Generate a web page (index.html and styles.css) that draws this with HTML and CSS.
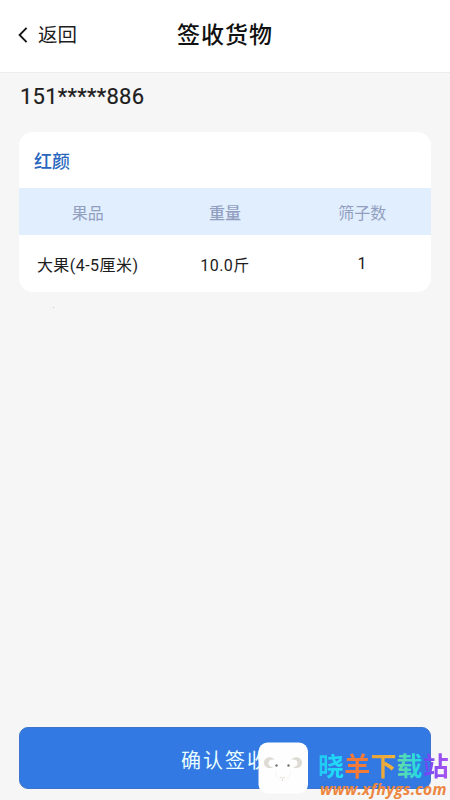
FILE: index.html
```html
<!DOCTYPE html>
<html lang="zh-CN">
<head>
<meta charset="utf-8">
<title>签收货物</title>
<link rel="stylesheet" href="styles.css">
</head>
<body>
<div class="page">
  <header class="header">
    <div class="back">
      <svg class="chevron" width="10" height="18" viewBox="0 0 10 18"><path d="M8.6 1.8 1.6 9l7 7.2" fill="none" stroke="#151515" stroke-width="1.9"/></svg>
      <span>返回</span>
    </div>
    <h1 class="title">签收货物</h1>
  </header>
  <main class="content">
    <div class="phone">151*****886</div>
    <section class="card">
      <h2 class="variety">红颜</h2>
      <div class="row row-head"><span>果品</span><span class="strong">重量</span><span>筛子数</span></div>
      <div class="row row-data"><span>大果(4-5厘米)</span><span>10.0斤</span><span class="count">1</span></div>
    </section>
    <div class="speck"></div>
  </main>
  <footer class="footer"><button class="confirm">确认签收</button></footer>
  <div class="watermark">
    <svg class="sheep" width="51" height="52" viewBox="0 0 51 52">
      <rect x=".5" y=".5" width="49.5" height="51" rx="9" fill="#fefefe"/>
      <g fill="#dedbd4">
        <path d="M17 18C14 13 5.500 15 6 21c.4 5 6 6.500 9 4-3 0-5-2-4.500-4.500C11 18 14 17 17 18z"/>
        <path d="M33 18c3-5 11.500-3 11 3-.4 5-6 6.500-9 4 3 0 5-2 4.500-4.500C39 18 36 17 33 18z"/>
      </g>
      <path d="M17 28c1 5 3 9 6 11M33 28c-1 5-3 9-6 11" fill="none" stroke="#f7f6f4"/>
      <path d="M22 35l2.500 1.500L27 35M24.500 37v2" fill="none" stroke="#e3dcd5"/>
      <circle cx="18.500" cy="23.500" r="1.200" fill="#77756f"/><circle cx="30.500" cy="23.500" r="1.200" fill="#77756f"/>
    </svg>
    <div class="brand">
      <div class="brand-name"><span class="c1">晓</span><span class="c2">羊</span><span class="c3">下</span><span class="c4">载</span><span class="c5">站</span></div>
      <div class="brand-url">www.xfhygs.com</div>
    </div>
  </div>
</div>
</body>
</html>
```
FILE: styles.css
```css
* { box-sizing: border-box; }
body { margin: 0; font-family: Roboto, "Noto Sans CJK SC", sans-serif; color: #1d1d1d; }
.page { position: relative; display: flex; flex-direction: column; height: 800px; overflow: hidden; background: #f6f6f6; }
.header { display: grid; grid-template-columns: 1fr auto 1fr; align-items: center; height: 73px; padding: 0 18px 1px; background: #fff; border-bottom: 1px solid #ececec; }
.back { display: flex; align-items: center; gap: 10px; font-size: 19.5px; line-height: 28px; }
.chevron { position: relative; top: -1px; }
.title { margin: 0; font-size: 23px; line-height: 32px; font-weight: 500; letter-spacing: 1px; color: #111; }
.content { flex: 1; padding: 10px 19px 0; }
.phone { height: 28px; line-height: 28px; font-size: 22px; letter-spacing: .25px; padding-left: 1px; -webkit-text-stroke: .2px; }
.card { margin-top: 21px; width: 412px; height: 160px; border-radius: 14px; overflow: hidden; background: #fff; }
.speck { width: 1px; height: 1px; margin: 15px 0 0 34px; background: #c8c8c8; }
.variety { margin: 0; height: 56px; padding: 5px 15px 0; line-height: 50px; font-size: 18px; font-weight: 500; color: #2866bd; }
.row { display: grid; grid-template-columns: repeat(3, 1fr); align-items: center; text-align: center; font-size: 16px; }
.row-head { height: 47px; background: #e0eefe; color: #929fc0; }
.row-head .strong { font-weight: 500; }
.row-data { height: 57px; padding-top: 1px; letter-spacing: .45px; }
.count { position: relative; top: -1px; }
.footer { padding: 0 19px 11px; }
.confirm { display: block; width: 412px; height: 62px; padding: 2px 0 0; border: 1px solid #3d74cc; border-radius: 9px; background: #3279e3; color: #e9ffff; font: 20px Roboto, "Noto Sans CJK SC", sans-serif; letter-spacing: 2px; }
.watermark { position: absolute; left: 258px; top: 741px; display: flex; gap: 9px; }
.sheep { margin-top: 1px; flex: none; }
.brand { padding-top: 12px; white-space: nowrap; }
.brand-name { display: flex; height: 28px; line-height: 28px; font-size: 26px; font-weight: 700; }
.brand-name span { width: 26.2px; height: 28px; background-clip: text; -webkit-background-clip: text; color: transparent; }
.c1 { background-image: linear-gradient(90deg, #22c8f4, #1fe0f8); }
.c2 { background-image: linear-gradient(90deg, #f57939, #f37b38); }
.c3 { background-image: linear-gradient(90deg, #e5a13b, #f3b43a); }
.c4 { background-image: linear-gradient(90deg, #67dda0, #18d8ef); }
.c5 { background-image: linear-gradient(90deg, #6846f5, #ad55ed); }
.brand-url { margin-left: 2px; font: italic 700 15.5px/16px "Open Sans", "Noto Sans", sans-serif; letter-spacing: .25px; color: #ed8640; }
```
